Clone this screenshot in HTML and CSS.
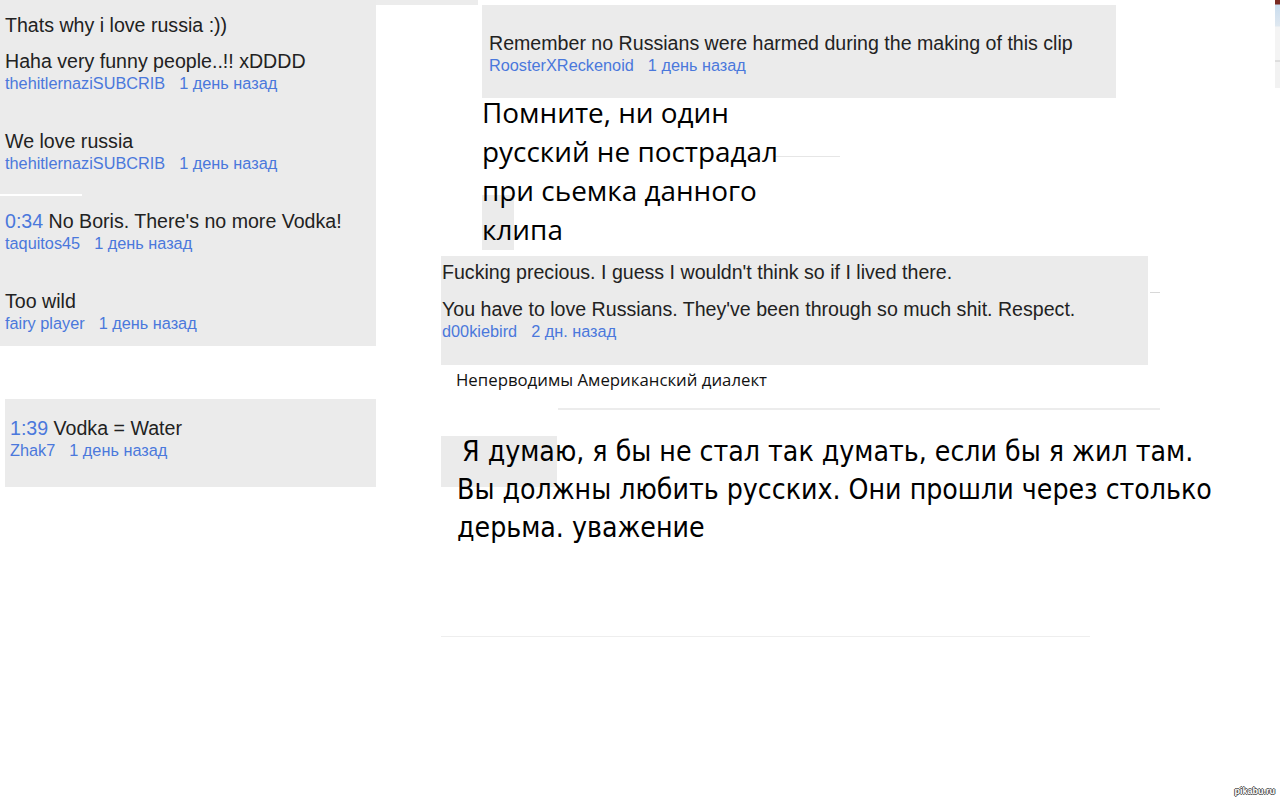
FILE: index.html
```html
<!DOCTYPE html>
<html lang="ru">
<head>
    <meta charset="UTF-8">
    <title>Russia comments</title>
    <link rel="stylesheet" href="styles.css">
</head>
<body>
    <div class="canvas">
        <div class="strip-top"></div>
        <div class="strip-right"></div>

        <div class="panel panel-left">
            <div class="text lead">Thats why i love russia :))</div>
            <div class="comment">
                <div class="text">Haha very funny people..!! xDDDD</div>
                <div class="meta"><span>thehitlernaziSUBCRIB</span><span>1 день назад</span></div>
            </div>
            <div class="comment">
                <div class="text">We love russia</div>
                <div class="meta"><span>thehitlernaziSUBCRIB</span><span>1 день назад</span></div>
            </div>
            <div class="comment">
                <div class="text"><span class="time">0:34</span> No Boris. There's no more Vodka!</div>
                <div class="meta"><span>taquitos45</span><span>1 день назад</span></div>
            </div>
            <div class="comment">
                <div class="text">Too wild</div>
                <div class="meta"><span>fairy player</span><span>1 день назад</span></div>
            </div>
            <div class="cut-line"></div>
        </div>

        <div class="panel panel-water">
            <div class="text"><span class="time">1:39</span> Vodka = Water</div>
            <div class="meta"><span>Zhak7</span><span>1 день назад</span></div>
        </div>

        <div class="panel panel-top">
            <div class="text">Remember no Russians were harmed during the making of this clip</div>
            <div class="meta"><span>RoosterXReckenoid</span><span>1 день назад</span></div>
        </div>

        <div class="patch patch-klipa"></div>
        <div class="rule rule-short"></div>
        <div class="translation translation-top">
            Помните, ни один<br>
            русский не пострадал<br>
            при сьемка данного<br>
            клипа
        </div>

        <div class="panel panel-mid">
            <div class="text">Fucking precious. I guess I wouldn't think so if I lived there.</div>
            <div class="comment">
                <div class="text">You have to love Russians. They've been through so much shit. Respect.</div>
                <div class="meta"><span>d00kiebird</span><span>2 дн. назад</span></div>
            </div>
        </div>
        <div class="rule rule-tick"></div>

        <div class="dialect">Неперводимы Американский диалект</div>
        <div class="rule rule-dialect"></div>

        <div class="patch patch-dumayu"></div>
        <div class="translation translation-big">
            <div class="first">Я думаю, я бы не стал так думать, если бы я жил там.</div>
            <div>Вы должны любить русских. Они прошли через столько</div>
            <div>дерьма. уважение</div>
        </div>
        <div class="rule rule-bottom"></div>

        <div class="watermark">pikabu.ru</div>
    </div>
</body>
</html>
```

FILE: styles.css
```css
html, body {
    margin: 0;
    padding: 0;
    background: #fff;
}
.canvas {
    position: relative;
    width: 1280px;
    height: 800px;
    overflow: hidden;
    font-family: "Liberation Sans", Arial, sans-serif;
}

/* grey screenshot pieces */
.panel {
    position: absolute;
    background-color: #ebebeb;
    box-sizing: border-box;
}
.text {
    font-size: 19.6px;
    line-height: 22px;
    color: #222;
    white-space: nowrap;
}
.time {
    color: #4a78dc;
}
.meta {
    margin-top: 2px;
    font-size: 16.3px;
    line-height: 18px;
    color: #4a78dc;
    white-space: nowrap;
}
.meta span + span {
    margin-left: 14px;
}
.comment {
    margin-bottom: 38px;
}
.lead {
    margin-bottom: 14px;
}

.panel-left {
    left: 0;
    top: 0;
    width: 376px;
    height: 346px;
    padding: 14px 0 0 5px;
}
.cut-line {
    position: absolute;
    left: 0;
    top: 194px;
    width: 82px;
    height: 2px;
    background: #fff;
}
.panel-water {
    left: 5px;
    top: 399px;
    width: 371px;
    height: 88px;
    padding: 18px 0 0 5px;
}
.panel-top {
    left: 482px;
    top: 5px;
    width: 634px;
    height: 93px;
    padding: 27px 0 0 7px;
}
.panel-mid {
    left: 441px;
    top: 256px;
    width: 707px;
    height: 109px;
    padding: 5px 0 0 1px;
}
.panel-mid > .text {
    margin-bottom: 15px;
}

.strip-top {
    position: absolute;
    left: 376px;
    top: 0;
    width: 102px;
    height: 5px;
    background: #ececec;
}
.strip-right {
    position: absolute;
    left: 1275px;
    top: 0;
    width: 5px;
    height: 88px;
    background: linear-gradient(#7a2a22 0, #7a2a22 4px, #c9dcee 5px, #dfe8f0 26px, #f4f4f4 27px, #f4f4f4 60px, #c8c8c8 61px, #f2f2f2 62px);
}

.patch {
    position: absolute;
    background-color: #ebebeb;
}
.patch-klipa {
    left: 482px;
    top: 195px;
    width: 32px;
    height: 55px;
}
.patch-dumayu {
    left: 441px;
    top: 436px;
    width: 116px;
    height: 51px;
}

/* thin leftover lines */
.rule {
    position: absolute;
    background: #e6e6e6;
}
.rule-short {
    left: 775px;
    top: 156px;
    width: 65px;
    height: 1px;
}
.rule-tick {
    left: 1150px;
    top: 292px;
    width: 10px;
    height: 1px;
    background: #d8d8d8;
}
.rule-dialect {
    left: 558px;
    top: 408px;
    width: 602px;
    height: 2px;
    background: #ececec;
}
.rule-bottom {
    left: 441px;
    top: 636px;
    width: 649px;
    height: 1px;
    background: #eeeeee;
}

/* hand typed translations */
.translation {
    position: absolute;
    color: #000;
    white-space: nowrap;
}
.translation-top {
    left: 482px;
    top: 93px;
    font-family: "Open Sans", "Noto Sans", sans-serif;
    font-size: 27.9px;
    line-height: 39px;
}
.translation-big {
    left: 457px;
    top: 433px;
    font-family: "DejaVu Sans Condensed", "Liberation Sans Narrow", "Open Sans", sans-serif;
    font-stretch: condensed;
    font-size: 28.2px;
    line-height: 38px;
}
.translation-big .first {
    padding-left: 5px;
}
.dialect {
    position: absolute;
    left: 456px;
    top: 369px;
    font-family: "Open Sans", "Noto Sans", sans-serif;
    font-size: 16.8px;
    line-height: 22px;
    color: #111;
    white-space: nowrap;
}

.watermark {
    position: absolute;
    right: 5px;
    top: 786px;
    font-family: "Liberation Sans", sans-serif;
    font-size: 9px;
    font-weight: bold;
    color: #fff;
    text-shadow: 1px 0 0 #555, -1px 0 0 #555, 0 1px 0 #555, 0 -1px 0 #555;
}
```
